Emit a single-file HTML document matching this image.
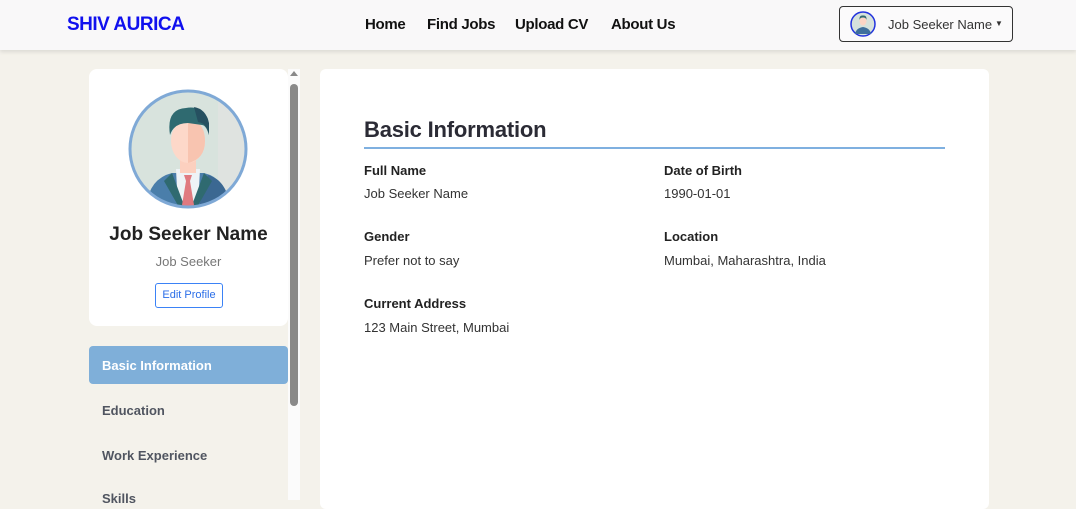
<!DOCTYPE html>
<html><head><style>
*{margin:0;padding:0;box-sizing:border-box}
body{width:1076px;height:500px;overflow:hidden;background:#f4f2eb;font-family:"Liberation Sans",sans-serif;position:relative;color:#222}
.hdr{position:absolute;left:0;top:0;width:1076px;height:50px;background:#f9f8f9;box-shadow:0 2px 4px rgba(0,0,0,.1)}
.logo{position:absolute;left:67px;top:14px;font-size:19px;font-weight:bold;color:#1010ee;letter-spacing:-0.5px}
.nav{position:absolute;top:16px;font-size:15px;color:#111;font-weight:bold;letter-spacing:-0.3px}
.user{position:absolute;left:839px;top:6px;width:174px;height:36px;border:1px solid #333;border-radius:4px;background:#fbfafb}
.user span{position:absolute;left:48px;top:10px;font-size:13px;color:#333}
.card{position:absolute;left:89px;top:69px;width:199px;height:257px;background:#fff;border-radius:8px}
.main{position:absolute;left:320px;top:69px;width:669px;height:440px;background:#fff;border-radius:6px}
.lbl{position:absolute;font-size:13px;font-weight:bold;color:#222}
.val{position:absolute;font-size:13px;color:#333}
.side{position:absolute;left:102px;font-size:13px;font-weight:bold;color:#505560}
</style></head><body>
<div class="hdr">
<div class="logo">SHIV AURICA</div>
<div class="nav" style="left:365px">Home</div>
<div class="nav" style="left:427px">Find Jobs</div>
<div class="nav" style="left:515px">Upload CV</div>
<div class="nav" style="left:611px">About Us</div>
<div class="user">
<svg style="position:absolute;left:10px;top:4px" width="26" height="26" viewBox="0 0 26 26"><circle cx="13" cy="13" r="12" fill="#d6e2dc" stroke="#2233dd" stroke-width="1.5"/><path d="M5 23 Q6 17 13 16 Q20 17 21 23 Z" fill="#3f6f9c"/><ellipse cx="13" cy="10" rx="3.5" ry="4.5" fill="#fcd5c5"/><path d="M9.5 9 Q9 4 13 4.5 Q17 4 16.5 9 Q16 6.5 13 6.5 Q10 6.5 9.5 9Z" fill="#2f6a70"/></svg>
<span>Job Seeker Name</span>
<span style="left:155px;top:12px;font-size:8px">▼</span>
</div>
</div>
<div class="card">
<svg style="position:absolute;left:39px;top:20px" width="120" height="120" viewBox="0 0 120 120">
<defs><clipPath id="c"><circle cx="60" cy="60" r="57"/></clipPath></defs>
<circle cx="60" cy="60" r="58" fill="#d8e3dd"/>
<g clip-path="url(#c)">
<path d="M90 10 A57 57 0 0 1 90 110 Z" fill="#dfe3e0"/>
<path d="M18 120 Q20 90 44 84 L76 84 Q100 90 102 120Z" fill="#4a7eaa"/>
<path d="M80 86 Q100 92 102 120 L70 120Z" fill="#3b6892"/>
<path d="M48 80 L72 80 L70 120 L50 120Z" fill="#eef3f6"/>
<path d="M44 84 L56 116 L52 120 L36 92Z" fill="#2f6a70"/>
<path d="M76 84 L64 116 L68 120 L84 92Z" fill="#2f6a70"/>
<path d="M56 86 L64 86 L62 92 L66 116 L60 122 L54 116 L58 92Z" fill="#e07a80"/>
<rect x="52" y="68" width="16" height="16" fill="#fcd0bf"/>
<ellipse cx="60" cy="52" rx="17" ry="22" fill="#fdd8c9"/>
<path d="M60 30 Q77 32 77 52 Q77 70 60 74Z" fill="#f8c4b0"/>
<path d="M42 46 Q38 20 58 19 Q72 16 80 30 L81 46 Q78 36 74 36 L60 34 Q46 34 42 46Z" fill="#2f6a70"/>
<path d="M66 18 Q78 20 81 34 L81 46 Q79 34 70 33Z" fill="#265060"/>
</g>
<circle cx="60" cy="60" r="58" fill="none" stroke="#7fa9d6" stroke-width="3"/>
</svg>
<div style="position:absolute;left:0;width:199px;top:155px;text-align:center;font-size:19px;font-weight:bold;color:#222">Job Seeker Name</div>
<div style="position:absolute;left:0;width:199px;top:185px;text-align:center;font-size:13px;color:#777">Job Seeker</div>
<div style="position:absolute;left:66px;top:214px;width:68px;height:25px;border:1px solid #3b82f6;border-radius:3px;font-size:11px;color:#2a6ee8;text-align:center;line-height:23px">Edit Profile</div>
</div>
<div style="position:absolute;left:89px;top:346px;width:199px;height:38px;background:#7fafd9;border-radius:4px"></div>
<div class="side" style="top:358px;color:#fff">Basic Information</div>
<div class="side" style="top:403px">Education</div>
<div class="side" style="top:448px">Work Experience</div>
<div class="side" style="top:491px">Skills</div>
<div style="position:absolute;left:288px;top:69px;width:12px;height:431px;background:#fbfbfb"></div>
<div style="position:absolute;left:290px;top:71px;width:0;height:0;border-left:4px solid transparent;border-right:4px solid transparent;border-bottom:5px solid #888"></div>
<div style="position:absolute;left:290px;top:84px;width:8px;height:322px;background:#8a8a8a;border-radius:4px"></div>
<div class="main">
<div style="position:absolute;left:44px;top:48px;font-size:22px;color:#2b2b35;font-weight:bold;letter-spacing:-0.2px">Basic Information</div>
<div style="position:absolute;left:44px;top:78px;width:581px;height:2px;background:#7fb0e0"></div>
<div class="lbl" style="left:44px;top:94px">Full Name</div>
<div class="val" style="left:44px;top:117px">Job Seeker Name</div>
<div class="lbl" style="left:344px;top:94px">Date of Birth</div>
<div class="val" style="left:344px;top:117px">1990-01-01</div>
<div class="lbl" style="left:44px;top:160px">Gender</div>
<div class="val" style="left:44px;top:184px">Prefer not to say</div>
<div class="lbl" style="left:344px;top:160px">Location</div>
<div class="val" style="left:344px;top:184px">Mumbai, Maharashtra, India</div>
<div class="lbl" style="left:44px;top:227px">Current Address</div>
<div class="val" style="left:44px;top:251px">123 Main Street, Mumbai</div>
</div>
</body></html>
